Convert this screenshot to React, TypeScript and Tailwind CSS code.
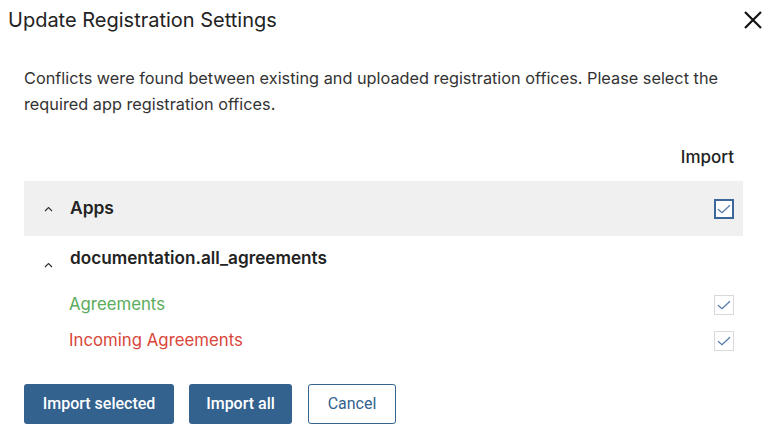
import React from "react";

const Check = ({ strong }: { strong?: boolean }) => (
  <div
    className={
      "w-5 h-5 flex items-center justify-center bg-white " +
      (strong ? "border-2 border-[#3c679b]" : "border border-[#d9d9d9]")
    }
  >
    <svg width="14" height="10" viewBox="0 0 14 10" fill="none">
      <path d="M1 5.2 L5 8.6 L13 1.2" stroke="#4f79ad" strokeWidth="1.2" />
    </svg>
  </div>
);

const Chevron = () => (
  <svg width="9" height="6" viewBox="0 0 9 6" fill="none">
    <path d="M1 5 L4.5 1.5 L8 5" stroke="#333" strokeWidth="1.2" />
  </svg>
);

export default function App() {
  return (
    <div
      className="w-[769px] h-[431px] bg-white text-[#333] overflow-hidden"
      style={{ fontFamily: "Inter, 'Noto Sans', sans-serif" }}
    >
      <div className="flex items-start justify-between pl-2 pr-[6px] pt-[7px] h-[50px]">
        <div className="text-[20px] leading-[26px] text-[#222]">Update Registration Settings</div>
        <svg width="20" height="20" viewBox="0 0 20 20" className="mt-[3px]">
          <path d="M2 2 L18 18 M18 2 L2 18" stroke="#111" strokeWidth="2.2" />
        </svg>
      </div>
      <div className="px-6">
        <p className="text-[16.3px] leading-[26px] mt-[15px] text-[#333]">
          Conflicts were found between existing and uploaded registration offices. Please select the
          required app registration offices.
        </p>
        <div className="mt-[22px] w-[719px]">
          <div className="flex justify-end pr-[9px] h-[38px] items-center text-[17px] font-medium text-[#222]">
            Import
          </div>
          <div className="flex items-center h-[55px] bg-[#f0f0f0] pl-5 pr-[9px] mt-[4px]">
            <div className="w-[26px] flex">
              <Chevron />
            </div>
            <div className="flex-1 text-[17.4px] font-semibold text-[#222]">Apps</div>
            <Check strong />
          </div>
          <div className="flex items-start h-[51px] pl-5 pr-[9px] pt-[10px]">
            <div className="w-[26px] flex pt-[16px]">
              <Chevron />
            </div>
            <div className="flex-1 text-[17.2px] font-semibold text-[#222] leading-[24px]">
              documentation.all_agreements
            </div>
          </div>
          <div className="flex items-center h-[36px] pl-[45px] pr-[9px]">
            <div className="flex-1 text-[16.8px] text-[#5aac5a]">Agreements</div>
            <Check />
          </div>
          <div className="flex items-center h-[36px] pl-[45px] pr-[9px]">
            <div className="flex-1 text-[16.8px] text-[#d9463a]">Incoming Agreements</div>
            <Check />
          </div>
        </div>
        <div className="flex gap-[15px] mt-[25px]">
          <button className="h-10 w-[150px] rounded-[3px] bg-[#33628f] text-white text-[16px] font-medium" style={{ fontFamily: "Roboto, sans-serif" }}>
            Import selected
          </button>
          <button className="h-10 w-[103px] rounded-[3px] bg-[#33628f] text-white text-[16px] font-medium" style={{ fontFamily: "Roboto, sans-serif" }}>
            Import all
          </button>
          <button className="h-10 w-[88px] ml-[1px] rounded-[3px] border border-[#33628f] bg-white text-[#33628f] text-[16px]" style={{ fontFamily: "Roboto, sans-serif" }}>
            Cancel
          </button>
        </div>
      </div>
    </div>
  );
}
